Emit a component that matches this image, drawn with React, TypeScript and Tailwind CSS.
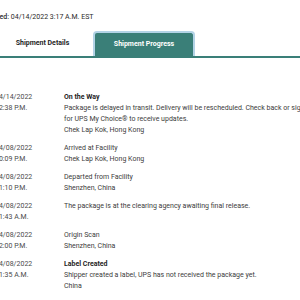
const events = [
  {
    date: '04/14/2022',
    time: '12:38 P.M.',
    title: 'On the Way',
    bold: true,
    lines: [
      'Package is delayed in transit. Delivery will be rescheduled. Check back or sign up',
      'for UPS My Choice® to receive updates.',
      'Chek Lap Kok, Hong Kong',
    ],
  },
  { date: '04/08/2022', time: '10:09 P.M.', title: 'Arrived at Facility', lines: ['Chek Lap Kok, Hong Kong'] },
  { date: '04/08/2022', time: '11:10 P.M.', title: 'Departed from Facility', lines: ['Shenzhen, China'] },
  { date: '04/08/2022', time: '11:43 A.M.', title: 'The package is at the clearing agency awaiting final release.', lines: [] },
  { date: '04/08/2022', time: '12:00 P.M.', title: 'Origin Scan', lines: ['Shenzhen, China'] },
  {
    date: '04/08/2022',
    time: '11:35 A.M.',
    title: 'Label Created',
    bold: true,
    lines: ['Shipper created a label, UPS has not received the package yet.', 'China'],
  },
];

export default function App() {
  return (
    <div className="w-[300px] h-[300px] overflow-hidden bg-white text-[7px] leading-[11px] text-[#3c3c3c]" style={{ fontFamily: 'Roboto, "Liberation Sans", sans-serif' }}>
      <div className="pt-[12px] ml-[-19px] whitespace-nowrap text-[#2a2a2a]">
        <span className="font-medium">Updated:</span> 04/14/2022 3:17 A.M. EST
      </div>

      <div className="mt-[8px] ml-[-8px] flex h-[27px] border-b-2 border-[#3a7f78]">
        <div className="w-[101px] flex items-center justify-center font-bold text-[#1f1f1f]">Shipment Details</div>
        <div className="w-[102px] flex items-center justify-center font-bold text-white bg-[#3a7f78] border-2 border-b-0 border-[#b3d3e6] rounded-t-[4px]">
          Shipment Progress
        </div>
      </div>

      <div className="mt-[34px] ml-[-5px] flex flex-col gap-[7px]">
        {events.map((e, i) => (
          <div key={i} className="flex whitespace-nowrap">
            <div className="w-[69px] shrink-0 text-[#4a4a4a]">
              <div>{e.date}</div>
              <div>{e.time}</div>
            </div>
            <div className="shrink-0">
              <div className={e.bold ? 'font-bold text-[#1f1f1f]' : 'text-[#3c3c3c]'}>{e.title}</div>
              {e.lines.map((l, j) => (
                <div key={j}>{l}</div>
              ))}
            </div>
          </div>
        ))}
      </div>
    </div>
  );
}
